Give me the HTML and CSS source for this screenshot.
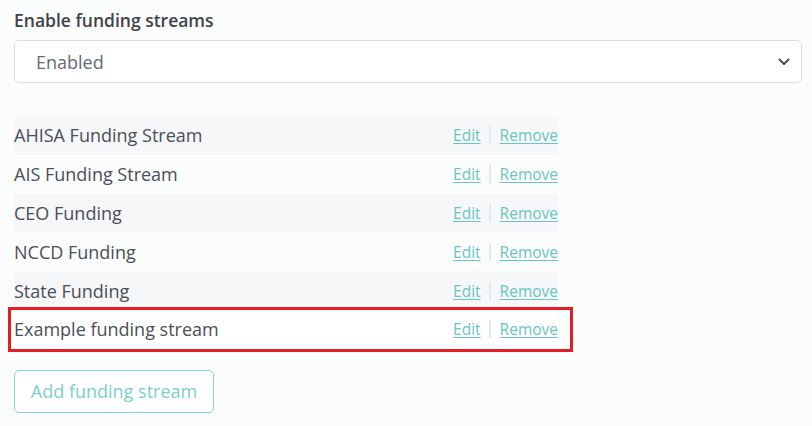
FILE: index.html
```html
<!DOCTYPE html>
<html>
<head>
    <title>Funding streams</title>
    <link rel="stylesheet" href="styles.css">
</head>
<body>
<div class="settings">
    <label class="field-label" for="enable">Enable funding streams</label>
    <div class="select-wrap">
        <select id="enable" class="select">
            <option>Enabled</option>
            <option>Disabled</option>
        </select>
        <svg class="chevron" width="12" height="8" viewBox="0 0 12 8"><path d="M1.5 1.5 L6 6 L10.5 1.5" fill="none" stroke="#4a4f55" stroke-width="2" stroke-linecap="round" stroke-linejoin="round"/></svg>
    </div>

    <div class="streams">
        <div class="stream striped">
            <span class="name">AHISA Funding Stream</span>
            <span class="actions"><a href="#">Edit</a><span class="sep"></span><a href="#">Remove</a></span>
        </div>
        <div class="stream">
            <span class="name">AIS Funding Stream</span>
            <span class="actions"><a href="#">Edit</a><span class="sep"></span><a href="#">Remove</a></span>
        </div>
        <div class="stream striped">
            <span class="name">CEO Funding</span>
            <span class="actions"><a href="#">Edit</a><span class="sep"></span><a href="#">Remove</a></span>
        </div>
        <div class="stream">
            <span class="name">NCCD Funding</span>
            <span class="actions"><a href="#">Edit</a><span class="sep"></span><a href="#">Remove</a></span>
        </div>
        <div class="stream striped">
            <span class="name">State Funding</span>
            <span class="actions"><a href="#">Edit</a><span class="sep"></span><a href="#">Remove</a></span>
        </div>
        <div class="stream highlighted">
            <span class="name">Example funding stream</span>
            <span class="actions"><a href="#">Edit</a><span class="sep"></span><a href="#">Remove</a></span>
            <div class="highlight-box"></div>
        </div>
    </div>

    <button class="add-btn">Add funding stream</button>
</div>
</body>
</html>
```

FILE: styles.css
```css
body {
    margin: 0;
    background-color: #fbfcfc;
    font-family: 'Open Sans', 'Liberation Sans', sans-serif;
    color: #4a4f56;
}
.settings {
    padding: 8px 10px 0 14px;
}
.field-label {
    display: block;
    font-size: 17.5px;
    font-weight: 600;
    line-height: 24px;
    color: #3f4349;
    margin-bottom: 8px;
}
.select-wrap {
    position: relative;
    width: 788px;
}
.select {
    appearance: none;
    -webkit-appearance: none;
    width: 100%;
    height: 43px;
    padding: 0 20px 0 21px;
    border: 1px solid #d9dcdf;
    border-radius: 5px;
    background: #ffffff;
    font-family: inherit;
    font-size: 18px;
    color: #646c74;
    box-sizing: border-box;
}
.chevron {
    position: absolute;
    right: 12px;
    top: 18px;
    pointer-events: none;
}
.streams {
    width: 544px;
    margin-top: 33px;
}
.stream {
    position: relative;
    display: flex;
    align-items: center;
    justify-content: space-between;
    height: 38.8px;
    font-size: 18px;
}
.striped {
    background-color: #f5f7f8;
}
.highlighted {
    background-color: #ffffff;
}
.actions {
    display: flex;
    align-items: center;
    font-size: 15.5px;
}
.actions a {
    color: #6ac5c2;
    text-decoration: underline;
    text-underline-offset: 2px;
}
.sep {
    width: 2px;
    height: 18px;
    background-color: #e4e7eb;
    margin: 0 9px 0 8px;
}
.highlight-box {
    position: absolute;
    left: -6px;
    right: -15px;
    top: -3px;
    bottom: -3px;
    border: 3px solid #e21d25;
    pointer-events: none;
}
.add-btn {
    margin-top: 21px;
    width: 200px;
    height: 43px;
    background-color: #ffffff;
    border: 1.5px solid #8ad4d1;
    border-radius: 5px;
    font-family: inherit;
    font-size: 18px;
    color: #7ccfcb;
    cursor: pointer;
}
```
